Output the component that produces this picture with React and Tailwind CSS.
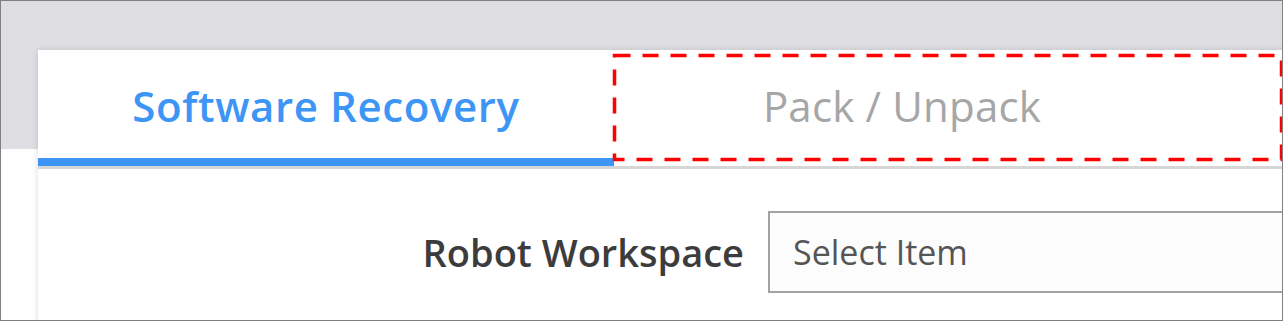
export default function App() {
  return (
    <div
      className="relative w-[1283px] h-[321px] overflow-hidden border border-[#808080] bg-white"
      style={{ fontFamily: '"Open Sans", "Noto Sans", sans-serif' }}
    >
      {/* page header band */}
      <div className="h-[148px] bg-[#dfdee3]" />

      {/* card */}
      <div className="-mt-[99px] ml-[37px] w-[1300px] h-[300px] bg-white shadow-[0_0_6px_rgba(0,0,0,0.14)]">
        <div className="flex h-[116px]">
          <div className="w-[576px] shrink-0 flex items-center justify-center pt-[4px] border-b-[8px] border-[#3d95f5]">
            <span className="text-[42px] tracking-[0.6px] font-semibold text-[#3d95f5] leading-none">Software Recovery</span>
          </div>
          <div className="w-[576px] shrink-0 flex items-center justify-center pt-[4px] pb-[8px]">
            <span className="text-[42px] tracking-[0.2px] text-[#a6a6a6] leading-none">Pack / Unpack</span>
          </div>
        </div>
        <div className="h-[3px] bg-[#d6d6d6]" />

        <div className="flex items-center pt-[42px]">
          <div className="w-[706px] shrink-0 text-right text-[38px] font-semibold text-[#3c3c3c] leading-none">
            Robot Workspace
          </div>
          <div className="ml-[24px] w-[560px] shrink-0 h-[82px] flex items-center px-[23px] border-2 border-[#a3a3a3] bg-[#fcfcfc]">
            <span className="text-[34px] text-[#555555] leading-none">Select Item</span>
          </div>
        </div>
      </div>

      {/* annotation: dashed highlight */}
      <svg className="absolute left-[611px] top-[52px]" width="672" height="110">
        <rect x="2.5" y="2.5" width="667" height="104" fill="none" stroke="#ff0000" strokeWidth="3.5" strokeDasharray="16 12" />
      </svg>
    </div>
  );
}
